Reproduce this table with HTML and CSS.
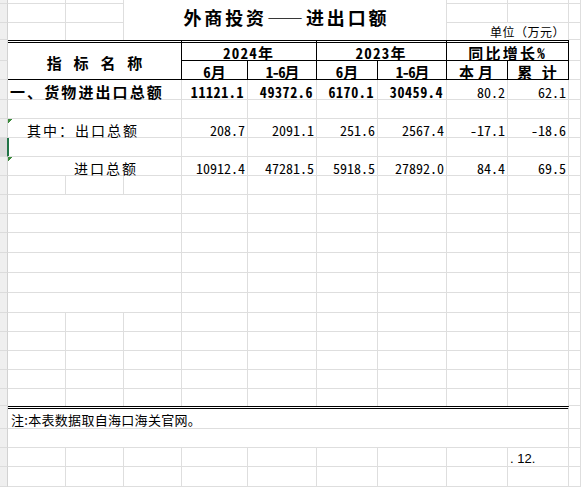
FILE: index.html
```html
<!DOCTYPE html>
<html lang="zh-CN">
<head>
<meta charset="utf-8">
<title>外商投资——进出口额</title>
<link rel="stylesheet" href="styles.css">
</head>
<body>
<table class="sheet">
<colgroup>
<col class="c-rh"><col class="c-a"><col class="c-b"><col class="c-c"><col class="c-d"><col class="c-e"><col class="c-f"><col class="c-g"><col class="c-h"><col class="c-i"><col class="c-j">
</colgroup>
<tbody>
<tr class="r0"><td class="rh"></td><td></td><td></td><td class="title" colspan="5" rowspan="3">外商投资——进出口额</td><td></td><td></td><td></td></tr>
<tr class="r1"><td class="rh"></td><td></td><td></td><td></td><td></td><td></td></tr>
<tr class="r2"><td class="rh"></td><td class="nb"></td><td class="nb"></td><td class="unit nb" colspan="2">单位（万元）</td><td></td></tr>
<tr class="r3"><td class="rh"></td><td class="hd dbl hname" colspan="3" rowspan="2">指 标 名 称</td><td class="hd dbl hyear" colspan="2">2024年</td><td class="hd dbl hyear" colspan="2">2023年</td><td class="hd dbl hyoy" colspan="2">同比增长%</td><td></td></tr>
<tr class="r4"><td class="rh"></td><td class="hd">6月</td><td class="hd hcum">1-6月</td><td class="hd">6月</td><td class="hd hcum">1-6月</td><td class="hd hmon">本月</td><td class="hd hacc">累 计</td><td></td></tr>
<tr class="r5"><td class="rh"></td><td class="lbl b" colspan="3">一、货物进出口总额</td><td class="num b">11121.1</td><td class="num b">49372.6</td><td class="num b">6170.1</td><td class="num b">30459.4</td><td class="num">80.2</td><td class="num">62.1</td><td></td></tr>
<tr class="r6"><td class="rh"></td><td colspan="3"></td><td></td><td></td><td></td><td></td><td></td><td></td><td></td></tr>
<tr class="r7"><td class="rh"></td><td class="lbl err sub1" colspan="3">其中：出口总额</td><td class="num">208.7</td><td class="num">2091.1</td><td class="num">251.6</td><td class="num">2567.4</td><td class="num">-17.1</td><td class="num">-18.6</td><td></td></tr>
<tr class="r8"><td class="rh sel"></td><td class="cur" colspan="3"></td><td></td><td></td><td></td><td></td><td></td><td></td><td></td></tr>
<tr class="r9"><td class="rh"></td><td class="lbl err sub2" colspan="3">进口总额</td><td class="num">10912.4</td><td class="num">47281.5</td><td class="num">5918.5</td><td class="num">27892.0</td><td class="num">84.4</td><td class="num">69.5</td><td></td></tr>
<tr class="r10"><td class="rh"></td><td></td><td></td><td></td><td></td><td></td><td></td><td></td><td></td><td></td><td></td></tr>
<tr class="r11"><td class="rh"></td><td colspan="3"></td><td></td><td></td><td></td><td></td><td></td><td></td><td></td></tr>
<tr class="r12"><td class="rh"></td><td colspan="3"></td><td></td><td></td><td></td><td></td><td></td><td></td><td></td></tr>
<tr class="r13"><td class="rh"></td><td colspan="3"></td><td></td><td></td><td></td><td></td><td></td><td></td><td></td></tr>
<tr class="r14"><td class="rh"></td><td colspan="3"></td><td></td><td></td><td></td><td></td><td></td><td></td><td></td></tr>
<tr class="r15"><td class="rh"></td><td colspan="3"></td><td></td><td></td><td></td><td></td><td></td><td></td><td></td></tr>
<tr class="r16"><td class="rh"></td><td colspan="3"></td><td></td><td></td><td></td><td></td><td></td><td></td><td></td></tr>
<tr class="r17"><td class="rh"></td><td></td><td></td><td></td><td></td><td></td><td></td><td></td><td></td><td></td><td></td></tr>
<tr class="r18"><td class="rh"></td><td></td><td></td><td></td><td></td><td></td><td></td><td></td><td></td><td></td><td></td></tr>
<tr class="r19"><td class="rh"></td><td></td><td></td><td></td><td></td><td></td><td></td><td></td><td></td><td></td><td></td></tr>
<tr class="r20"><td class="rh"></td><td></td><td></td><td></td><td></td><td></td><td></td><td></td><td></td><td></td><td></td></tr>
<tr class="r21"><td class="rh"></td><td class="nb"></td><td class="nb"></td><td class="nb"></td><td class="nb"></td><td class="nb"></td><td class="nb"></td><td class="nb"></td><td class="nb"></td><td class="nb"></td><td></td></tr>
<tr class="r22"><td class="rh"></td><td class="note dbl" colspan="9">注:本表数据取自海口海关官网。</td><td></td></tr>
<tr class="r23"><td class="rh"></td><td colspan="9"></td><td></td></tr>
<tr class="r24"><td class="rh"></td><td></td><td></td><td></td><td></td><td></td><td></td><td></td><td></td><td class="page">. 12.</td><td></td></tr>
<tr class="r25"><td class="rh"></td><td></td><td></td><td></td><td></td><td></td><td></td><td></td><td></td><td></td><td></td></tr>
</tbody>
</table>
</body>
</html>
```
FILE: styles.css
```css
* { box-sizing: border-box; }
html, body { margin: 0; padding: 0; background: #fff; }
body { width: 581px; height: 487px; overflow: hidden; }

.sheet {
  border-collapse: separate;
  border-spacing: 0;
  table-layout: fixed;
  width: 581px;
  font-family: "Noto Sans Mono CJK SC", "Noto Sans CJK SC", sans-serif;
  font-feature-settings: "hwid" 1;
  font-size: 14px;
  color: #000;
}
.c-rh { width: 8px; }
.c-a, .c-b, .c-c { width: 58px; }
.c-d { width: 66px; }
.c-e { width: 69px; }
.c-f { width: 61px; }
.c-g { width: 69px; }
.c-h, .c-i { width: 61px; }
.c-j { width: 12px; }

.sheet td {
  border-right: 1px solid #dedede;
  border-bottom: 1px solid #dedede;
  padding: 0 2px;
  white-space: nowrap;
  line-height: 14px;
  vertical-align: bottom;
}
.sheet td.rh {
  padding: 0;
  background: #efefef;
  border-right: 1px solid #d2d2d2;
  border-bottom: 1px solid #dcdcdc;
}
.sheet td.rh.sel { background: #dadada; border-right-color: #217346; }
.sheet td.cur { box-shadow: inset 1px 0 0 #217346; }

.r0 { height: 4px; }
.r1 { height: 19px; }
.r2 { height: 17px; }
.r3 { height: 21px; }
.r4 { height: 19px; }
.r5 { height: 20px; }
.r6, .r7, .r8, .r9, .r10, .r11, .r12 { height: 19px; }
.r13, .r14, .r15, .r16 { height: 20px; }
.r17, .r18, .r19, .r20 { height: 19px; }
.r21 { height: 17px; }
.r22 { height: 23px; }
.r23, .r24 { height: 19px; }
.r25 { height: 20px; }

.sheet td.nb { border-bottom: none; }

.sheet td.title {
  font-family: "Noto Sans CJK SC", sans-serif;
  font-feature-settings: normal;
  font-size: 18px;
  font-weight: 700;
  letter-spacing: 2.9px;
  line-height: 22px;
  text-align: center;
  vertical-align: top;
  padding: 6px 0 0 2.9px;
  border-bottom: none;
}
.sheet td.unit {
  font-family: "Noto Sans CJK SC", sans-serif;
  font-feature-settings: normal;
  font-size: 12px;
  letter-spacing: 0.5px;
  text-align: right;
  padding: 0 3px 1px 0;
}

.sheet td.hd {
  font-size: 15px;
  font-weight: 700;
  line-height: 15px;
  text-align: center;
  border-right: 1px solid #000;
  border-bottom: 1px solid #000;
}
.sheet td.dbl { border-top: 3px double #000; }
.sheet td.hname {
  vertical-align: middle;
  letter-spacing: 2.2px;
  padding: 3px 0 0 2.2px;
}
.sheet td.hyear { letter-spacing: 1.2px; padding-left: 1.2px; }
.sheet td.hyoy { letter-spacing: 2.3px; padding-left: 2.3px; }
.sheet td.hcum { letter-spacing: -1.2px; }
.sheet td.hmon { letter-spacing: 4px; padding-left: 4px; }
.sheet td.hacc { letter-spacing: 1px; padding-left: 1px; }

.sheet td.lbl { text-align: left; letter-spacing: 2px; }
.sheet td.lbl.b { font-size: 15px; font-weight: 700; line-height: 15px; letter-spacing: 2.1px; padding-left: 2px; }
.sheet td.sub1 { padding-left: 19px; }
.sheet td.sub2 { padding-left: 66px; }
.sheet td.err {
  background: linear-gradient(135deg, #3b8a3b 0 3px, transparent 3px) no-repeat 0 0 / 6px 6px;
}

.sheet td.num { text-align: right; padding-right: 2px; }
.sheet td.num.b { font-weight: 700; letter-spacing: 0.6px; padding-right: 3px; }

.sheet td.note {
  font-family: "Noto Sans CJK SC", sans-serif;
  font-feature-settings: normal;
  font-size: 13px;
  letter-spacing: 0.3px;
  padding: 0 0 1px 3px;
}
.sheet td.page {
  font-family: "Liberation Sans", Arial, sans-serif;
  font-feature-settings: normal;
  font-size: 13px;
  line-height: 15px;
  padding: 0 0 0 2px;
}
```
